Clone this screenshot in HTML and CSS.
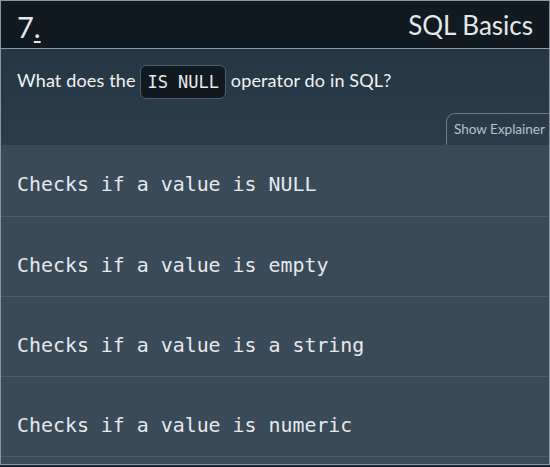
FILE: index.html
```html
<!DOCTYPE html>
<html>
<head>
<meta charset="utf-8">
<link rel="stylesheet" href="styles.css">
</head>
<body>
<div class="card">
  <header class="top">
    <div class="num">7<span class="dot">.</span></div>
    <div class="title">SQL Basics</div>
  </header>
  <section class="question">
    <p class="qtext">What does the <code class="chip">IS NULL</code> operator do in SQL?</p>
    <div class="tabrow"><span class="tab">Show Explainer</span></div>
  </section>
  <ul class="answers">
    <li class="answer first">Checks if a value is NULL</li>
    <li class="answer">Checks if a value is empty</li>
    <li class="answer">Checks if a value is a string</li>
    <li class="answer">Checks if a value is numeric</li>
  </ul>
</div>
</body>
</html>
```
FILE: styles.css
```css
* { box-sizing: border-box; }
html, body { margin: 0; padding: 0; }
body {
  background: #1b2731;
  width: 550px;
  height: 467px;
  overflow: hidden;
  font-family: "Lato", "Open Sans", sans-serif;
  color: #f1f3f4;
}
.card {
  width: 550px;
  height: 465px;
  border: 1px solid #8c969e;
  background: #394a58;
  display: flex;
  flex-direction: column;
  overflow: hidden;
}
.top {
  height: 48px;
  flex: none;
  background: #111a21;
  border-bottom: 1px solid #8c969e;
  display: flex;
  align-items: center;
  justify-content: space-between;
  padding: 0 16px 0 16px;
}
.num {
  font-size: 29px;
  font-weight: 400;
  color: #e6e8ea;
  line-height: 1;
  padding-top: 4px;
}
.dot {
  text-decoration: underline;
  text-underline-offset: 3px;
  text-decoration-thickness: 2px;
}
.title {
  font-size: 26px;
  font-weight: 400;
  color: #e6e8ea;
  line-height: 1;
}
.question {
  flex: none;
  height: 96px;
  background: linear-gradient(#253744, #2b3d4a);
  display: flex;
  flex-direction: column;
  justify-content: space-between;
}
.qtext {
  margin: 0;
  padding: 14px 16px 0 16px;
  font-size: 18px;
  letter-spacing: 0.15px;
  line-height: 34px;
  color: #f1f3f4;
}
.chip {
  display: inline-block;
  font-family: "DejaVu Sans Mono", monospace;
  font-size: 17px;
  letter-spacing: 0;
  line-height: 32px;
  padding: 0 6px;
  background: #111a21;
  border: 1px solid #4e5d69;
  border-radius: 6px;
  color: #e8eaec;
  vertical-align: middle;
}
.tabrow {
  display: flex;
  justify-content: flex-end;
}
.tab {
  display: block;
  width: 103px;
  height: 32px;
  border: 1px solid #6c7b88;
  border-right: none;
  border-bottom: none;
  border-top-left-radius: 9px;
  font-size: 13.5px;
  line-height: 30px;
  padding-left: 7px;
  color: #b9c2ca;
  white-space: nowrap;
}
.answers {
  list-style: none;
  margin: 0;
  padding: 0;
}
.answer {
  font-family: "DejaVu Sans Mono", monospace;
  font-size: 19.9px;
  line-height: 24px;
  padding: 37px 16px 18px 16px;
  border-bottom: 1px solid #4b5b68;
  color: #e6e9eb;
}
.answer.first {
  padding-top: 28px;
  padding-bottom: 19px;
}
```
